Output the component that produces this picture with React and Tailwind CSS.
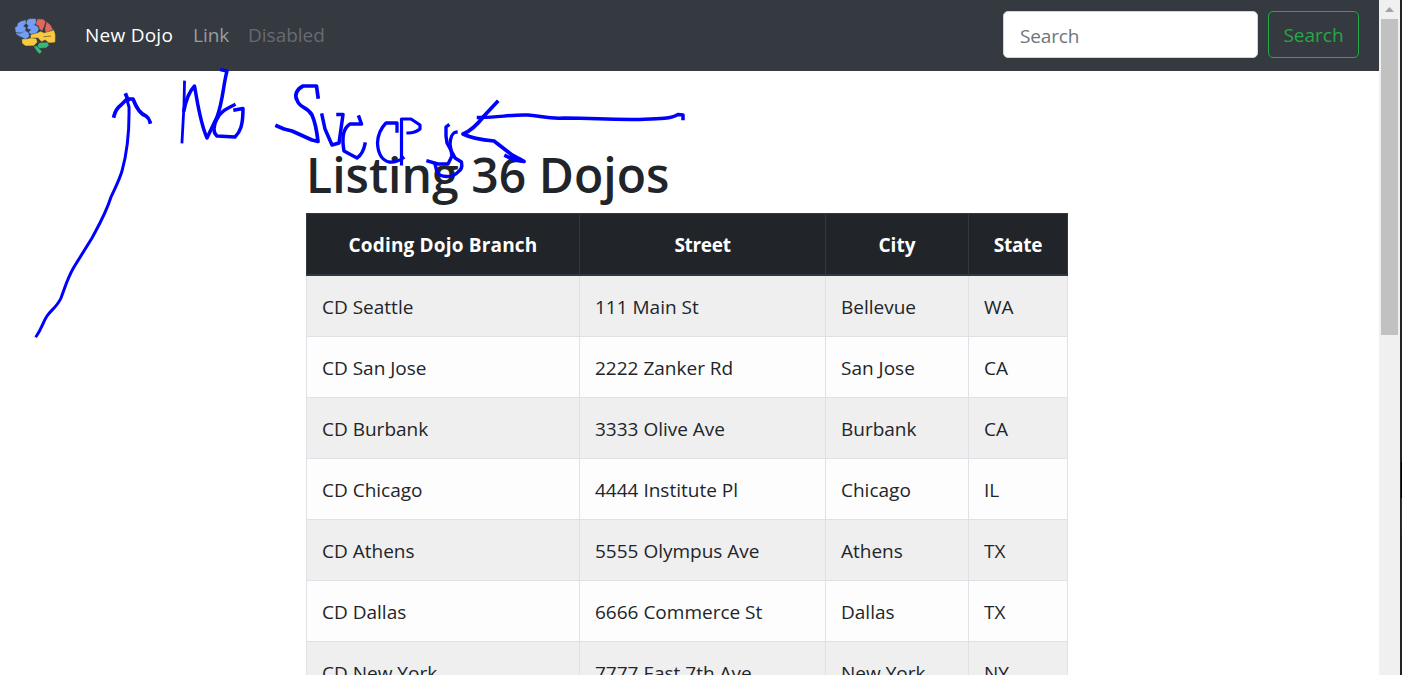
const rows = [
  ['CD Seattle', '111 Main St', 'Bellevue', 'WA'],
  ['CD San Jose', '2222 Zanker Rd', 'San Jose', 'CA'],
  ['CD Burbank', '3333 Olive Ave', 'Burbank', 'CA'],
  ['CD Chicago', '4444 Institute Pl', 'Chicago', 'IL'],
  ['CD Athens', '5555 Olympus Ave', 'Athens', 'TX'],
  ['CD Dallas', '6666 Commerce St', 'Dallas', 'TX'],
  ['CD New York', '7777 East 7th Ave', 'New York', 'NY'],
];

const headers = [
  { label: 'Coding Dojo Branch', tracking: 'tracking-[0.17px]' },
  { label: 'Street', tracking: 'tracking-[-0.3px]' },
  { label: 'City', tracking: 'tracking-[0px]' },
  { label: 'State', tracking: 'tracking-[-0.25px]' },
];

function BrainLogo() {
  return (
    <svg className="block h-[38px] w-[42px]" viewBox="14 17 42 38" strokeLinejoin="round">
      <g fill="#729ff5" stroke="#729ff5" strokeWidth=".5">
        <path d="M21 21.5 25.5 20.5 25.5 23.5 23 26.5 25.5 27.5 25 31 20.5 32.5 16 32 15.3 27.5 17.5 26.5 18 23.5Z" />
        <path d="M27.5 20 30 19 35.5 19 36 22.5 33.8 25 37.3 26.5 38.5 29.5 36.5 32.5 31 34 29 32 31.5 29.5 27.5 28.5 28.5 25.5 26.5 23.5Z" />
        <path d="M16 33.5 20.5 33.8 25.5 31 28.5 33 29 36.5 25.5 38.8 22 37 19.5 36Z" />
      </g>
      <g fill="#e0695e" stroke="#e0695e" strokeWidth=".4">
        <path d="M37.5 19.3 43 19.4 45.3 21.5 44 26 42.2 30.5 39.8 29 38.6 25.5 36.2 24.5Z" />
        <path d="M46.7 22.3 50 24.8 52.7 29.5 46 32.2 45.2 29Z" />
      </g>
      <g fill="#fbc93d" stroke="#fbc93d" strokeWidth=".6">
        <path d="M31 35 37.5 33.3 40.5 31.7 44 33.3 49 32 53.7 30.5 55 35 54.8 42 49 42.4 45 39.5 41.5 41.3 38 37.5 31 37.8Z" />
        <path d="M22.3 39.5 27 39.3 30.5 38.5 36 39 37 42 34 45.2 25.5 45.4 22.5 43.2Z" />
      </g>
      <path d="M43.5 36.8 51 36" stroke="#343a40" strokeWidth=".6" />
      <g fill="#38b779" stroke="#38b779" strokeWidth=".5">
        <path d="M39.5 43 47.8 42.8 48.4 45.5 46 47.5 39.5 48 37.8 46Z" />
        <path d="M34.2 46.5 37 46.4 41.5 51.5 39.8 53.4 37.8 52Z" />
      </g>
    </svg>
  );
}

function Navbar() {
  return (
    <nav className="flex h-[71px] items-center bg-[#343a40] pr-5 pl-[14px] text-[19px]">
      <BrainLogo />
      <div className="ml-[29px] flex flex-1 items-center pb-[2px] leading-[30px]">
        <a className="w-[108px] whitespace-nowrap tracking-[0.25px] text-white">New Dojo</a>
        <a className="w-[55px] text-[#9a9da0]">Link</a>
        <a className="text-[#676b70]">Disabled</a>
      </div>
      <form className="flex -translate-y-px gap-[10px]">
        <input
          className="h-[47px] w-[255px] rounded-[5px] border border-[#ced4da] bg-white px-[16px] pt-[3px] tracking-[-0.15px] outline-none placeholder:text-[#6c757d]"
          placeholder="Search"
        />
        <button
          type="button"
          className="h-[47px] w-[91px] rounded-[5px] border border-[#28a745] pt-[2px] text-[#28a745]"
        >
          Search
        </button>
      </form>
    </nav>
  );
}

function DojoTable() {
  return (
    <table className="w-[762px] table-fixed border-separate border-spacing-0 text-[19px] leading-[30px]">
      <colgroup>
        <col className="w-[273px]" />
        <col className="w-[246px]" />
        <col className="w-[143px]" />
        <col />
      </colgroup>
      <thead>
        <tr className="h-[63px] bg-[#212529] text-white">
          {headers.map((h) => (
            <th
              key={h.label}
              className={`border-t border-b-2 border-l border-[#32383e] p-0 pt-[2px] font-bold last:border-r ${h.tracking}`}
            >
              {h.label}
            </th>
          ))}
        </tr>
      </thead>
      <tbody>
        {rows.map((r) => (
          <tr key={r[0]} className="h-[61px] odd:bg-[#efefef] even:bg-[#fdfdfd]">
            {r.map((c) => (
              <td
                key={c}
                className="border-b border-l border-[#dee2e6] p-0 pt-[2px] pl-[15px] whitespace-nowrap last:border-r"
              >
                {c}
              </td>
            ))}
          </tr>
        ))}
      </tbody>
    </table>
  );
}

function Scrollbar() {
  return (
    <div className="flex w-[23px] shrink-0">
      <div className="flex w-[21px] flex-col bg-[#f0f0f0] pl-[2px]">
        <div className="h-[19px] pt-[7px] pl-[4px]">
          <svg className="block h-[5px] w-[9px]" viewBox="0 0 9 5">
            <path d="M0 5 4.5 0 9 5Z" fill="#a3a3a3" />
          </svg>
        </div>
        <div className="h-[316px] w-[17px] bg-[#c1c1c1]" />
      </div>
      <div className="flex w-[2px] flex-col items-end bg-[#222]">
        <div className="mt-[462px] h-[36px] w-px bg-black" />
        <div className="h-[37px] w-px bg-[#303030]" />
      </div>
    </div>
  );
}

function Annotations() {
  return (
    <svg
      className="pointer-events-none absolute top-0 left-0"
      width="700"
      height="345"
      fill="none"
      stroke="#0000ff"
      strokeWidth="3.5"
      strokeLinecap="square"
      strokeLinejoin="round"
    >
      <path d="M36.500 336C42 328 43 322 47 316S57 307 61 298C66 285 67 279 74 267L92 238C99 225 106 213 111 197C115 188 119 181 122 171C127 153 129.500 133 129 107L127 100" strokeWidth="3" />
      <path d="M126 95 128 100M114 116C115 112 117 108 121 105L127 99 133 99C136 107 140 114 146 116Q149 118 150 122" strokeWidth="3.700" />
      <path d="M184.500 82 184 105 182 142" strokeWidth="2.800" />
      <path d="M184 110Q187 94 194.500 86C198 105 200 122 207 138L217 117C223 101 223 86 227 71L222 70" />
      <path d="M234 105C226 109 220 112 217 119C213 126 213 133 217 136L235 137C240 132 243 126 243 108.500L235 110" />
      <path d="M318 97 316.500 86 303 86C297 89 294 95 297 100C300 109 307 106 312 115Q316 124 318 141.500L312 140 292 131 284 129 277 126" strokeWidth="3.700" />
      <path d="M322 115 325 129 332 145 339 143 343 114.500 338 114.500" />
      <path d="M359 117 361.500 124 350 124C342 129 342 140 344 151L357 158Q363 154 365 144" />
      <path d="M397 131V123L386 123Q378 131 377.500 143C378 153 381 160 389 162Q396 163 403 158" strokeWidth="3.300" />
      <path d="M401.500 164V119L411 119 420 125V129C415 133 411 133 408 133" strokeWidth="3.200" />
      <path d="M448 125.500 446 127V136L447 143 453 154 455 158 461.500 162Q463 169 458 172C453 178 440 178 437 172L435 164" strokeWidth="3.400" />
      <path d="M456 132Q451 132 450 144L452 156 448 164 438 164 428 161" strokeWidth="3.400" />
      <path d="M497 102 484 116C477 125 471 131 463 134C471 138 483 140 494 141L512 155 524 161.500 514 160 506 156" strokeWidth="3.700" />
      <path d="M478.500 117.500C498 118 511 114 528 115C544 116 546 119 564 118C598 118 603 120 640 119.500C656 119 671 119 678 114.500L683 115V118.500" />
    </svg>
  );
}

export default function App() {
  return (
    <div className="relative flex h-[675px] w-[1402px] overflow-hidden bg-white font-['Open_Sans',sans-serif] text-[#212529]">
      <div className="w-[1379px] overflow-hidden">
        <Navbar />
        <main className="pl-[306px]">
          <h1 className="mt-[74px] mb-[8px] h-[60px] text-[48px] leading-[60px] font-semibold tracking-[0.05px] whitespace-nowrap">
            Listing 36 Dojos
          </h1>
          <DojoTable />
        </main>
      </div>
      <Scrollbar />
      <Annotations />
    </div>
  );
}
